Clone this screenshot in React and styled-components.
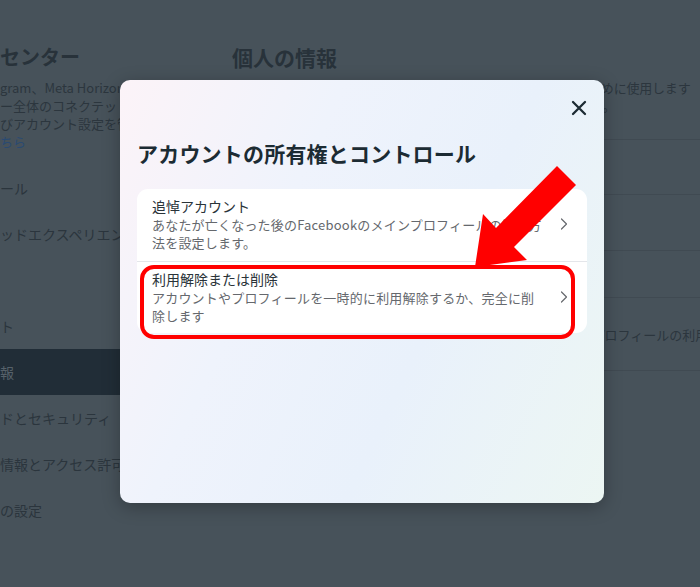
import React from "react";
import styled, { createGlobalStyle } from "styled-components";

const GlobalStyle = createGlobalStyle`
  html, body { margin: 0; padding: 0; }
  body {
    background: #47525a;
    font-family: "Noto Sans CJK JP", "Noto Sans", sans-serif;
  }
`;

const Page = styled.div`
  position: relative;
  width: 700px;
  height: 587px;
  overflow: hidden;
  display: flex;
  background: #47525a;
`;

const Sidebar = styled.aside`
  width: 212px;
  flex: none;
  display: flex;
  flex-direction: column;
  padding-top: 43px;
`;

const SideTitle = styled.div`
  font-size: 20px;
  line-height: 28px;
  font-weight: 700;
  color: #28323a;
  white-space: nowrap;
`;

const SideDesc = styled.div`
  margin-top: 8px;
  font-size: 13px;
  line-height: 18px;
  color: #2c363e;
  white-space: nowrap;
`;

const SideLink = styled.span`
  color: #2a4a72;
`;

const NavList = styled.nav`
  margin-top: 14px;
  display: flex;
  flex-direction: column;
`;

const NavItem = styled.div`
  height: 46px;
  display: flex;
  align-items: center;
  font-size: 14px;
  color: ${(p) => (p.$active ? "#56616a" : "#2b353d")};
  background: ${(p) => (p.$active ? "#212d37" : "transparent")};
  white-space: nowrap;
`;

const Main = styled.main`
  flex: 1;
  padding: 43px 0 0 20px;
  display: flex;
  flex-direction: column;
  min-width: 0;
`;

const MainTitle = styled.h1`
  margin: 0;
  font-size: 21px;
  line-height: 28px;
  font-weight: 700;
  color: #28323a;
`;

const MainDesc = styled.p`
  margin: 8px 0 0;
  font-size: 13px;
  line-height: 18px;
  color: #2c363e;
  white-space: nowrap;
  display: flex;
  flex-direction: column;
`;

const DescLine = styled.span`
  letter-spacing: ${(p) => p.$spacing || 0}px;
`;

const InfoCard = styled.div`
  margin-top: 24px;
  border-top: 1px solid #404a52;
  display: flex;
  flex-direction: column;
`;

const InfoRow = styled.div`
  height: ${(p) => p.$h}px;
  box-sizing: border-box;
  border-bottom: 1px solid #404a52;
  padding: 8px 0 0 22px;
  display: flex;
  flex-direction: column;
  white-space: nowrap;
`;

const InfoTitle = styled.div`
  font-size: 14px;
  line-height: 20px;
  color: #2b353d;
`;

const InfoDesc = styled.div`
  font-size: 13px;
  line-height: 18px;
  color: #2c363e;
`;

const Modal = styled.div`
  position: absolute;
  left: 120px;
  top: 80px;
  width: 484px;
  height: 423px;
  box-sizing: border-box;
  padding: 20px 17px 0;
  border-radius: 10px;
  background: linear-gradient(115deg, #fcf3f8 0%, #eff3fc 33%, #e9f1fb 62%, #ecf6f3 100%);
  box-shadow: 0 4px 18px rgba(0, 0, 0, 0.28);
  display: flex;
  flex-direction: column;
`;

const CloseRow = styled.div`
  display: flex;
  justify-content: flex-end;
  height: 16px;
`;

const CloseButton = styled.button`
  width: 16px;
  height: 16px;
  padding: 0;
  border: 0;
  background: none;
  display: flex;
  align-items: center;
  justify-content: center;
  cursor: pointer;
`;

const ModalTitle = styled.h2`
  margin: 23px 0 0;
  font-size: 21px;
  line-height: 28px;
  font-weight: 700;
  color: #1c2b33;
  white-space: nowrap;
  letter-spacing: 0.2px;
`;

const OptionCard = styled.div`
  margin-top: 22px;
  background: #ffffff;
  border-radius: 11px;
  display: flex;
  flex-direction: column;
  overflow: hidden;
`;

const OptionRow = styled.div`
  display: flex;
  align-items: center;
  gap: 12px;
  height: 72px;
  box-sizing: border-box;
  padding: 0 19px 2px 15px;
  border-top: ${(p) => (p.$divider ? "1px solid #e4e6ea" : "none")};
  cursor: pointer;
`;

const OptionText = styled.div`
  flex: 1;
  min-width: 0;
  display: flex;
  flex-direction: column;
`;

const OptionTitle = styled.div`
  font-size: 14px;
  line-height: 20px;
  color: #2a3339;
`;

const OptionDesc = styled.div`
  font-size: 13px;
  line-height: 18px;
  color: #65686d;
  white-space: nowrap;
  letter-spacing: 0.2px;
`;

const Chevron = styled.svg`
  flex: none;
  width: 8px;
  height: 12px;
`;

const Highlight = styled.div`
  position: absolute;
  left: 140px;
  top: 265px;
  width: 435px;
  height: 74px;
  box-sizing: border-box;
  border: 4px solid #ff0000;
  border-radius: 14px;
  pointer-events: none;
`;

const Arrow = styled.svg`
  position: absolute;
  left: 460px;
  top: 160px;
  width: 130px;
  height: 120px;
  pointer-events: none;
`;

const ChevronIcon = () => (
  <Chevron viewBox="0 0 8 12">
    <path d="M1.5 1 L6.5 6 L1.5 11" fill="none" stroke="#65686d" strokeWidth="1.2" strokeLinecap="round" strokeLinejoin="round" />
  </Chevron>
);

export default function App() {
  return (
    <>
      <GlobalStyle />
      <Page>
        <Sidebar>
          <SideTitle>センター</SideTitle>
          <SideDesc>
            gram、Meta Horizonなど<br />
            ー全体のコネクテッドエクスペリエンス<br />
            びアカウント設定を管理<br />
            <SideLink>ちら</SideLink>
          </SideDesc>
          <NavList>
            <NavItem>ール</NavItem>
            <NavItem>ッドエクスペリエンス</NavItem>
            <NavItem aria-hidden="true" />
            <NavItem>ト</NavItem>
            <NavItem $active>報</NavItem>
            <NavItem>ドとセキュリティ</NavItem>
            <NavItem>情報とアクセス許可</NavItem>
            <NavItem>の設定</NavItem>
          </NavList>
        </Sidebar>
        <Main>
          <MainTitle>個人の情報</MainTitle>
          <MainDesc>
            <DescLine $spacing={-0.2}>アカウントセンターでは、この情報をエクスペリエンス向上のために使用します</DescLine>
            <DescLine $spacing={0.3}>また、アカウントの安全を保ち、不正なアクセスを防止します。</DescLine>
          </MainDesc>
          <InfoCard>
            <InfoRow $h={55}><InfoTitle>連絡先情報</InfoTitle></InfoRow>
            <InfoRow $h={56}><InfoTitle>誕生日</InfoTitle></InfoRow>
            <InfoRow $h={47}><InfoTitle>本人確認</InfoTitle></InfoRow>
            <InfoRow $h={73}>
              <InfoTitle>所有権</InfoTitle>
              <InfoDesc>追悼アカウントの設定内容を管理したり、各アカウントやプロフィールの利用解除または削除を行ったりできます。</InfoDesc>
            </InfoRow>
          </InfoCard>
        </Main>

        <Modal role="dialog" aria-label="アカウントの所有権とコントロール">
          <CloseRow>
            <CloseButton aria-label="閉じる">
              <svg width="16" height="16" viewBox="0 0 16 16">
                <path d="M2 2 L14 14 M14 2 L2 14" stroke="#1c2b33" strokeWidth="2.3" strokeLinecap="round" />
              </svg>
            </CloseButton>
          </CloseRow>
          <ModalTitle>アカウントの所有権とコントロール</ModalTitle>
          <OptionCard>
            <OptionRow>
              <OptionText>
                <OptionTitle>追悼アカウント</OptionTitle>
                <OptionDesc>
                  あなたが亡くなった後のFacebookのメインプロフィールの管理方<br />
                  法を設定します。
                </OptionDesc>
              </OptionText>
              <ChevronIcon />
            </OptionRow>
            <OptionRow $divider>
              <OptionText>
                <OptionTitle>利用解除または削除</OptionTitle>
                <OptionDesc>
                  アカウントやプロフィールを一時的に利用解除するか、完全に削<br />
                  除します
                </OptionDesc>
              </OptionText>
              <ChevronIcon />
            </OptionRow>
          </OptionCard>
        </Modal>

        <Highlight />
        <Arrow viewBox="0 0 130 120">
          <polygon points="97,6 116,25 54,87 67,100 15,107 23,54 36,68" fill="#ff0000" />
        </Arrow>
      </Page>
    </>
  );
}
